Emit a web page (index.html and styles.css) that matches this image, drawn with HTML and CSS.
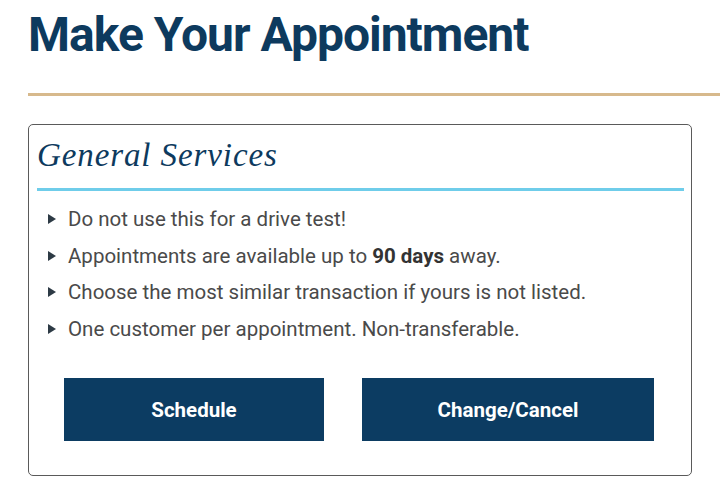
FILE: index.html
```html
<!DOCTYPE html>
<html lang="en">
<head>
    <meta charset="UTF-8">
    <meta name="viewport" content="width=device-width, initial-scale=1.0">
    <title>Make Your Appointment</title>
    <link rel="stylesheet" href="styles.css">
</head>
<body>
    <header class="page-header">
        <h1>Make Your Appointment</h1>
    </header>
    <main>
        <section class="card">
            <h2 class="card-title">General Services</h2>
            <ul class="notes">
                <li>Do not use this for a drive test!</li>
                <li>Appointments are available up to <strong>90 days</strong> away.</li>
                <li>Choose the most similar transaction if yours is not listed.</li>
                <li>One customer per appointment. Non-transferable.</li>
            </ul>
            <div class="actions">
                <button class="btn btn-schedule">Schedule</button>
                <button class="btn btn-change">Change/Cancel</button>
            </div>
        </section>
    </main>
</body>
</html>
```

FILE: styles.css
```css
body {
    font-family: Roboto, "Liberation Sans", sans-serif;
    margin: 0;
    padding: 0;
    background-color: #ffffff;
    color: #444;
}
.page-header {
    margin-left: 28px;
    border-bottom: 3px solid #d7b98c;
    padding-top: 6px;
    height: 96px;
    box-sizing: border-box;
}
.page-header h1 {
    margin: 0;
    font-size: 48px;
    font-weight: 700;
    color: #0d3a5e;
    letter-spacing: -1px;
}
main {
    padding: 28px 28px 0 28px;
}
.card {
    width: 664px;
    height: 352px;
    box-sizing: border-box;
    border: 1.5px solid #5a5a5a;
    border-radius: 5px;
    padding: 12px 7px 0 8px;
}
.card-title {
    margin: 0;
    font-family: "Liberation Serif", serif;
    font-style: italic;
    font-weight: 400;
    font-size: 33px;
    line-height: 36px;
    letter-spacing: 0.9px;
    color: #0d3a5e;
    padding-bottom: 15px;
    border-bottom: 3px solid #6fcdea;
}
.notes {
    list-style: none;
    margin: 10px 0 0 0;
    padding: 0 0 0 11px;
}
.notes li {
    font-size: 20.5px;
    line-height: 36.5px;
    color: #4a4a4a;
}
.notes li::before {
    content: "";
    display: inline-block;
    border-left: 8px solid #2d3a45;
    border-top: 5px solid transparent;
    border-bottom: 5px solid transparent;
    margin-right: 12px;
    vertical-align: 2px;
}
.notes strong {
    color: #333;
}
.actions {
    display: flex;
    gap: 38px;
    margin-top: 31px;
    padding-left: 27px;
}
.btn {
    height: 63px;
    border: none;
    background-color: #0c3c62;
    color: #fff;
    font-family: Roboto, "Liberation Sans", sans-serif;
    font-weight: 700;
    font-size: 20.5px;
}
.btn-schedule {
    width: 260px;
}
.btn-change {
    width: 292px;
}
```
